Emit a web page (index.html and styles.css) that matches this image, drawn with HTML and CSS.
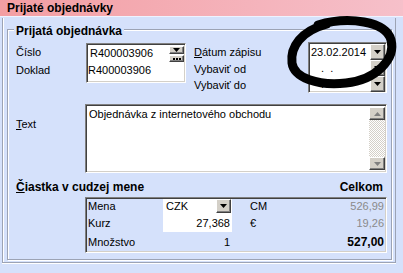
FILE: index.html
```html
<!DOCTYPE html>
<html>
<head>
<meta charset="utf-8">
<link rel="stylesheet" href="styles.css">
</head>
<body>
<div class="title">Prijaté objednávky</div>
<div class="title-sep"></div>
<div class="panel">
  <div class="group">
    <div class="legend">Prijatá objednávka</div>
    <div class="top">
      <div class="lbls1"><div>Číslo</div><div>Doklad</div></div>
      <div class="docbox sunk">
        <div class="docrow">
          <span class="doc1">R400003906</span>
          <div class="docbtns">
            <div class="btn mini"><svg width="7" height="4" viewBox="0 0 7 4"><path d="M0 0H7L3.5 4Z" fill="#000"/></svg></div>
            <div class="btn mini"><svg width="8" height="2" viewBox="0 0 8 2"><rect x="0" y="0" width="2" height="2"/><rect x="3" y="0" width="2" height="2"/><rect x="6" y="0" width="2" height="2"/></svg></div>
          </div>
        </div>
        <div class="doc2">R400003906</div>
      </div>
      <div class="lbls2"><div><u>D</u>átum zápisu</div><div>Vybaviť od</div><div>Vybaviť do</div></div>
      <div class="datebox sunk">
        <div class="drow"><span class="dval">23.02.2014</span><div class="btn dbtn"><svg width="7" height="4" viewBox="0 0 7 4"><path d="M0 0H7L3.5 4Z"/></svg></div></div>
        <div class="drow"><span class="dval dots">.&nbsp;&nbsp;.</span><div class="btn dbtn"><svg width="7" height="4" viewBox="0 0 7 4"><path d="M0 0H7L3.5 4Z"/></svg></div></div>
        <div class="drow"><span class="dval dots">.&nbsp;&nbsp;.</span><div class="btn dbtn"><svg width="7" height="4" viewBox="0 0 7 4"><path d="M0 0H7L3.5 4Z"/></svg></div></div>
      </div>
    </div>
    <div class="textrow">
      <div class="tlabel"><u>T</u>ext</div>
      <div class="memo sunk">
        <div class="memotext">Objednávka z internetového obchodu</div>
        <div class="vscroll">
          <div class="btn sbtn"><svg width="7" height="4" viewBox="0 0 7 4"><path d="M3.5 0L7 4H0Z" fill="#808080"/></svg></div>
          <div class="track"></div>
          <div class="btn sbtn"><svg width="7" height="4" viewBox="0 0 7 4"><path d="M0 0H7L3.5 4Z" fill="#808080"/></svg></div>
        </div>
      </div>
    </div>
    <div class="sumhead"><span><u>Č</u>iastka v cudzej mene</span><span>Celkom</span></div>
    <div class="sumtable sunk">
      <div class="c-lbl">Mena</div>
      <div class="c-in combo"><span>CZK</span><div class="btn cbtn"><svg width="7" height="4" viewBox="0 0 7 4"><path d="M0 0H7L3.5 4Z"/></svg></div></div>
      <div class="c-cur">CM</div>
      <div class="c-val gray">526,99</div>
      <div class="c-lbl">Kurz</div>
      <div class="c-in num">27,368</div>
      <div class="c-cur">€</div>
      <div class="c-val gray">19,26</div>
      <div class="c-lbl">Množstvo</div>
      <div class="c-plain num">1</div>
      <div class="c-cur"></div>
      <div class="c-val total">527,00</div>
    </div>
  </div>
</div>
<svg class="scribble" width="403" height="273" viewBox="0 0 403 273">
  <path d="M318 25 C348 16 386 21 391 40 C396 59 376 80 346 83 C318 86 294 78 292 63 C290 47 301 31 327 24" fill="none" stroke="#000" stroke-width="9" stroke-linecap="round" stroke-linejoin="round"/>
</svg>
</body>
</html>
```

FILE: styles.css
```css
* { box-sizing: border-box; }
html, body { margin: 0; padding: 0; }
body {
  width: 403px;
  height: 273px;
  overflow: hidden;
  position: relative;
  background: #d5e1fb;
  font-family: "Liberation Sans", Arial, sans-serif;
  font-size: 11px;
  color: #000;
}
.title {
  height: 16px;
  background: linear-gradient(to right, #f39ea3, #f6c0ca);
  font-weight: bold;
  font-size: 12px;
  line-height: 16px;
  padding-left: 7px;
}
.title-sep {
  height: 2px;
  border-top: 1px solid #eef3ff;
}
.panel {
  margin-left: 2px;
  width: 394px;
  border-left: 1px solid #9ca3b4;
  border-right: 1px solid #9ca3b4;
  border-bottom: 1px solid #9ca3b4;
  box-shadow: inset 1px 0 #fff, 0 1px #fff;
  padding: 11px 0 2px 4px;
}
.group {
  width: 385px;
  height: 231px;
  border: 1px solid #9ca3b4;
  box-shadow: inset 1px 1px #fff, 1px 1px #fff;
  padding: 0 4px 0 8px;
}
.legend {
  width: max-content;
  font-weight: bold;
  font-size: 12px;
  line-height: 14px;
  padding: 0 2px;
  margin: -6px 0 0 -2px;
  background: #d5e1fb;
}
.sunk {
  background: #fff;
  border: 1px solid;
  border-color: #808080 #fff #fff #808080;
  box-shadow: inset 1px 1px #404040, inset -1px -1px #d4d0c8;
  padding: 1px;
}
.btn {
  background: #d4d0c8;
  border: 1px solid;
  border-color: #fff #404040 #404040 #fff;
  box-shadow: inset -1px -1px #808080;
  display: flex;
  align-items: center;
  justify-content: center;
}
.btn svg { display: block; }
.top {
  display: flex;
  margin-top: 4px;
  height: 51px;
}
.lbls1 {
  width: 70px;
  padding-top: 1px;
  line-height: 18px;
}
.docbox {
  width: 100px;
  height: 40px;
  margin-top: 1px;
}
.docrow {
  display: flex;
  height: 17px;
}
.doc1 {
  flex: 1;
  padding-left: 2px;
  line-height: 17px;
}
.docbtns {
  width: 15px;
  display: flex;
  flex-direction: column;
  gap: 1px;
  padding-top: 1px;
}
.mini { height: 8px; }
.mini + .mini { height: 7px; }
.doc2 { line-height: 17px; }
.lbls2 {
  width: 114px;
  margin-left: 8px;
  padding-top: 2px;
  line-height: 16.5px;
}
.datebox {
  width: 79px;
  height: 51px;
}
.drow {
  display: flex;
  height: 16px;
}
.dval {
  flex: 1;
  padding-left: 1px;
  line-height: 16px;
}
.dots { padding-left: 11px; }
.dbtn { width: 15px; height: 16px; }
.textrow {
  display: flex;
  margin-top: 11px;
}
.tlabel {
  width: 69px;
  padding-top: 13px;
  line-height: 14px;
}
.memo {
  width: 302px;
  height: 69px;
  display: flex;
}
.memotext {
  flex: 1;
  padding-left: 2px;
  line-height: 16px;
}
.vscroll {
  width: 16px;
  display: flex;
  flex-direction: column;
  padding: 1px 0;
}
.sbtn { height: 13px; }
.track {
  flex: 1;
  background: repeating-conic-gradient(#d4d0c8 0 25%, #fff 0 50%) 0 0 / 2px 2px;
}
.sumhead {
  display: flex;
  justify-content: space-between;
  margin-top: 7px;
  padding-right: 4px;
  font-weight: bold;
  font-size: 12px;
  line-height: 14px;
}
.sumtable {
  margin: 3px 0 0 69px;
  width: 302px;
  height: 56px;
  display: grid;
  grid-template-columns: 76px 69px 1fr auto;
  grid-template-rows: 14px 19px 19px;
  align-items: center;
  background: #d5e1fb;
}
.sumtable > div { height: 100%; display: flex; align-items: center; }
.c-lbl { padding-left: 1px; }
.c-in { background: #fff; }
.combo { padding-left: 3px; justify-content: space-between; }
.cbtn { width: 15px; height: 14px; margin-right: 1px; }
.num { justify-content: flex-end; padding-right: 2px; }
.c-cur { padding-left: 18px; }
.c-val { justify-content: flex-end; padding-right: 1px; }
.gray { color: #8a8a8a; }
.total { font-weight: bold; font-size: 12px; }
.scribble {
  position: absolute;
  left: 0;
  top: 0;
  pointer-events: none;
}
```
